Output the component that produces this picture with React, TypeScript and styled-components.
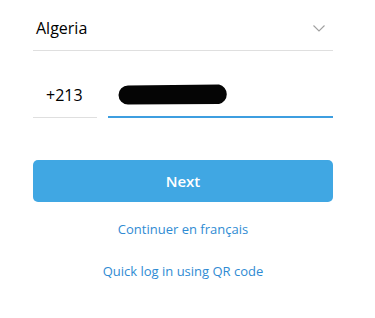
import React from "react";
import styled, { createGlobalStyle } from "styled-components";

const Global = createGlobalStyle`
  html, body { margin: 0; padding: 0; background: #fff; }
  body { font-family: "Open Sans", "Noto Sans", sans-serif; }
`;

const Page = styled.div`
  width: 300px;
  padding-left: 33px;
  display: flex;
  flex-direction: column;
`;

const CountryRow = styled.div`
  height: 51px;
  box-sizing: border-box;
  padding: 6px 8px 0 3px;
  border-bottom: 1px solid #dfdfdf;
  display: flex;
  align-items: center;
  justify-content: space-between;
  font-size: 16px;
  color: #000;
`;

const PhoneRow = styled.div`
  display: flex;
  align-items: flex-end;
  gap: 11px;
  margin-top: 22px;
`;

const Field = styled.div<{ $active?: boolean; $w?: number }>`
  height: 45px;
  box-sizing: border-box;
  display: flex;
  align-items: center;
  font-size: 16px;
  color: #000;
  ${(p) => (p.$w ? `width: ${p.$w}px;` : "flex: 1;")}
  border-bottom: ${(p) => (p.$active ? "2px solid #3d9ee0" : "1px solid #dfdfdf")};
  padding: ${(p) => (p.$active ? "0 0 0 10px" : "0 0 0 13px")};
`;

const Button = styled.button`
  margin-top: 42px;
  height: 42px;
  width: 300px;
  padding: 0;
  border: none;
  border-radius: 5px;
  background: #40a7e3;
  color: #fff;
  font-family: "Open Sans", sans-serif;
  font-weight: 600;
  font-size: 15px;
  line-height: 20px;
  cursor: pointer;
`;

const LinkText = styled.a<{ $gap: number }>`
  display: block;
  text-align: center;
  margin-top: ${(p) => p.$gap}px;
  line-height: 18px;
  font-size: 13px;
  color: #2f8bd3;
  text-decoration: none;
`;

const Chevron = () => (
  <svg width="12" height="7" viewBox="0 0 12 7" fill="none">
    <path d="M0.5 0.5L6 6L11.5 0.5" stroke="#a0a0a0" strokeWidth="1.1" />
  </svg>
);

const Redacted = () => (
  <svg width="112" height="21" viewBox="0 0 112 21">
    <path d="M10 1.5 L101 0.5 A10 10 0 0 1 101 20 L10 20.5 A9.5 9.5 0 0 1 10 1.5 Z" fill="#050505" />
  </svg>
);

export default function App() {
  return (
    <>
      <Global />
      <Page>
        <CountryRow>
          <span>Algeria</span>
          <Chevron />
        </CountryRow>
        <PhoneRow>
          <Field $w={64}>+213</Field>
          <Field $active>
            <Redacted />
          </Field>
        </PhoneRow>
        <Button>Next</Button>
        <LinkText $gap={18}>Continuer en français</LinkText>
        <LinkText $gap={24}>Quick log in using QR code</LinkText>
      </Page>
    </>
  );
}
